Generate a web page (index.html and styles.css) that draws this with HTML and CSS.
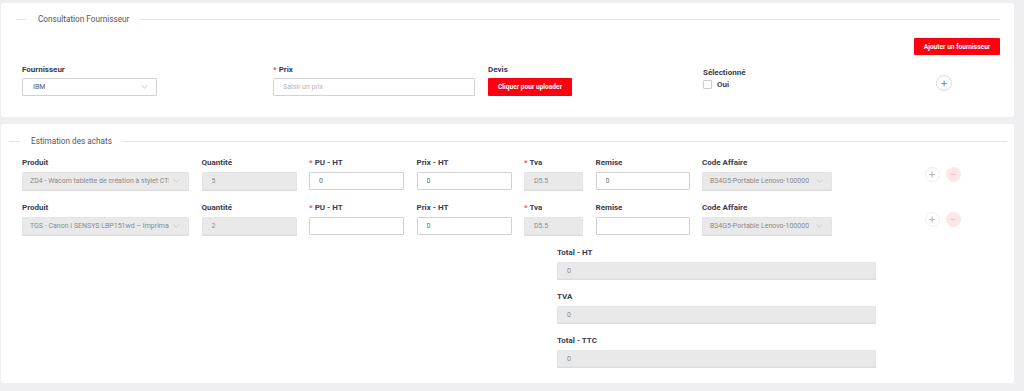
FILE: index.html
```html
<!DOCTYPE html>
<html lang="fr">
<head>
    <meta charset="UTF-8">
    <meta name="viewport" content="width=device-width, initial-scale=1.0">
    <title>Consultation Fournisseur</title>
    <link rel="stylesheet" href="styles.css">
</head>
<body>
    <div class="page">
        <section class="card card-supplier">
            <div class="legend">
                <span class="legend-line short"></span>
                <span class="legend-text">Consultation Fournisseur</span>
                <span class="legend-line long"></span>
            </div>

            <div class="toolbar">
                <button class="btn-red btn-add">Ajouter un fournisseur</button>
            </div>

            <div class="supplier-row">
                <div class="field">
                    <label class="label">Fournisseur</label>
                    <div class="select select-supplier">
                        <span>IBM</span>
                        <svg class="chevron" width="7" height="4" viewBox="0 0 8 5"><polyline points="0.5,0.5 4,4 7.5,0.5" fill="none" stroke="#aaa" stroke-width="0.8"/></svg>
                    </div>
                </div>
                <div class="field">
                    <label class="label"><span class="req">*</span> Prix</label>
                    <input type="text" class="input input-price" placeholder="Saisir un prix">
                </div>
                <div class="field">
                    <label class="label">Devis</label>
                    <button class="btn-red btn-upload">Cliquer pour uploader</button>
                </div>
                <div class="field">
                    <label class="label">Sélectionné</label>
                    <label class="check"><span class="check-box"></span>Oui</label>
                </div>
                <div class="actions">
                    <span class="circle circle-plus">+</span>
                </div>
            </div>
        </section>

        <section class="card card-purchase">
            <div class="legend">
                <span class="legend-line short"></span>
                <span class="legend-text">Estimation des achats</span>
                <span class="legend-line long"></span>
            </div>

            <div class="line-row">
                <div class="field">
                    <label class="label">Produit</label>
                    <div class="select disabled">
                        <span>ZD4 - Wacom tablette de création à stylet CTL</span>
                        <svg class="chevron" width="7" height="4" viewBox="0 0 8 5"><polyline points="0.5,0.5 4,4 7.5,0.5" fill="none" stroke="#bbb" stroke-width="0.8"/></svg>
                    </div>
                </div>
                <div class="field">
                    <label class="label">Quantité</label>
                    <div class="input disabled">5</div>
                </div>
                <div class="field">
                    <label class="label"><span class="req">*</span> PU - HT</label>
                    <input type="text" class="input" value="0">
                </div>
                <div class="field">
                    <label class="label">Prix - HT</label>
                    <input type="text" class="input" value="0">
                </div>
                <div class="field">
                    <label class="label"><span class="req">*</span> Tva</label>
                    <div class="input disabled">D5.5</div>
                </div>
                <div class="field">
                    <label class="label">Remise</label>
                    <input type="text" class="input" value="0">
                </div>
                <div class="field">
                    <label class="label">Code Affaire</label>
                    <div class="select disabled">
                        <span>B34G5-Portable Lenovo-100000</span>
                        <svg class="chevron" width="7" height="4" viewBox="0 0 8 5"><polyline points="0.5,0.5 4,4 7.5,0.5" fill="none" stroke="#bbb" stroke-width="0.8"/></svg>
                    </div>
                </div>
                <div class="actions">
                    <span class="circle circle-plus faint">+</span>
                    <span class="circle circle-minus">&minus;</span>
                </div>
            </div>

            <div class="line-row">
                <div class="field">
                    <label class="label">Produit</label>
                    <div class="select disabled">
                        <span>TGS - Canon I SENSYS LBP151wd – Imprimar</span>
                        <svg class="chevron" width="7" height="4" viewBox="0 0 8 5"><polyline points="0.5,0.5 4,4 7.5,0.5" fill="none" stroke="#bbb" stroke-width="0.8"/></svg>
                    </div>
                </div>
                <div class="field">
                    <label class="label">Quantité</label>
                    <div class="input disabled">2</div>
                </div>
                <div class="field">
                    <label class="label"><span class="req">*</span> PU - HT</label>
                    <input type="text" class="input" value="">
                </div>
                <div class="field">
                    <label class="label">Prix - HT</label>
                    <input type="text" class="input" value="0">
                </div>
                <div class="field">
                    <label class="label"><span class="req">*</span> Tva</label>
                    <div class="input disabled">D5.5</div>
                </div>
                <div class="field">
                    <label class="label">Remise</label>
                    <input type="text" class="input" value="">
                </div>
                <div class="field">
                    <label class="label">Code Affaire</label>
                    <div class="select disabled">
                        <span>B34G5-Portable Lenovo-100000</span>
                        <svg class="chevron" width="7" height="4" viewBox="0 0 8 5"><polyline points="0.5,0.5 4,4 7.5,0.5" fill="none" stroke="#bbb" stroke-width="0.8"/></svg>
                    </div>
                </div>
                <div class="actions">
                    <span class="circle circle-plus faint">+</span>
                    <span class="circle circle-minus">&minus;</span>
                </div>
            </div>

            <div class="totals">
                <div class="field">
                    <label class="label">Total - HT</label>
                    <div class="input disabled total">0</div>
                </div>
                <div class="field">
                    <label class="label">TVA</label>
                    <div class="input disabled total">0</div>
                </div>
                <div class="field">
                    <label class="label">Total - TTC</label>
                    <div class="input disabled total">0</div>
                </div>
            </div>
        </section>
    </div>
</body>
</html>
```

FILE: styles.css
```css
body {
    margin: 0;
    background: #efeff1;
    font-family: Roboto, "Open Sans", sans-serif;
    color: #3b3b4f;
}

.page {
    padding: 3px 10px 0 1px;
}

.card {
    background: white;
    border-radius: 3px;
    margin-bottom: 7px;
}

.card-supplier {
    padding: 11px 14px 21px 15px;
}

.card-purchase {
    padding: 12px 7px 16px 8px;
}

/* fieldset style title */
.legend {
    display: flex;
    align-items: center;
    height: 10px;
}

.legend-line {
    height: 1px;
    background: #e4e4e8;
}

.legend-line.short {
    width: 11px;
}

.legend-line.long {
    flex: 1;
}

.legend-text {
    font-size: 8.2px;
    color: #555;
    padding: 0 11px;
    white-space: nowrap;
}

.card-purchase .legend-text {
    padding: 0 10px 0 11px;
}

.toolbar {
    display: flex;
    justify-content: flex-end;
    margin-top: 14px;
}

.btn-red {
    background: #ff0010;
    color: white;
    border: none;
    border-radius: 1px;
    font-family: Roboto, sans-serif;
    font-weight: bold;
    font-size: 6.6px;
    height: 17px;
    padding: 0;
    cursor: pointer;
}

.btn-add {
    width: 86px;
}

.btn-upload {
    width: 84px;
    height: 18px;
}

.supplier-row {
    display: grid;
    grid-template-columns: 251px 215px 215px 233px 16px;
    align-items: center;
    margin: 10px 0 0 6px;
}

.field {
    display: flex;
    flex-direction: column;
    align-items: flex-start;
}

.label {
    font-size: 8px;
    font-weight: bold;
    line-height: 10px;
    margin-bottom: 3px;
    white-space: nowrap;
}

.req {
    color: #f2545b;
}

.input, .select {
    box-sizing: border-box;
    height: 18px;
    width: 100%;
    border: 1px solid #d2d2d6;
    border-radius: 1px;
    background: white;
    font-family: Roboto, sans-serif;
    font-size: 7px;
    color: #666;
    padding: 0 9px;
    display: flex;
    align-items: center;
    outline: none;
}

.input::placeholder {
    color: #b5b5b5;
}

.select {
    justify-content: space-between;
    gap: 4px;
}

.select span {
    overflow: hidden;
    white-space: nowrap;
}

.chevron {
    flex-shrink: 0;
}

.select-supplier {
    width: 135px;
    padding: 0 8px 0 10px;
    color: #555;
}

.input-price {
    width: 202px;
}

.disabled {
    background: #e9e9ea;
    border-color: #e4e4e6;
    box-shadow: 0 1px 0 #dcdcdc;
    color: #8a8a8a;
}

.check {
    display: flex;
    align-items: center;
    gap: 5px;
    font-size: 8px;
    font-weight: bold;
    color: #444;
    height: 18px;
    margin-top: -5px;
}

.check-box {
    width: 7px;
    height: 7px;
    border: 1px solid #ccc;
    border-radius: 1px;
}

.actions {
    display: flex;
    gap: 6px;
    padding-top: 5px;
}

.circle {
    box-sizing: border-box;
    width: 16px;
    height: 16px;
    border-radius: 50%;
    display: flex;
    align-items: center;
    justify-content: center;
    font-size: 11px;
    line-height: 1;
}

.circle-plus {
    border: 1px solid #dadade;
    color: #888;
}

.circle-plus.faint {
    border-color: #eeeef0;
    color: #b5b5bc;
    width: 15px;
    height: 15px;
}

.circle-minus {
    background: #fde6e7;
    color: #f6b5b8;
    width: 15px;
    height: 15px;
}

.line-row {
    display: grid;
    grid-template-columns: 167px 95px 95px 95px 59px 94px 130px auto;
    column-gap: 12.5px;
    align-items: center;
    margin: 12px 0 0 13px;
}

.line-row + .line-row {
    margin-top: 13px;
}

.line-row .label {
    margin-bottom: 4px;
}

.line-row .select {
    padding: 0 8px 0 7px;
}

.line-row .actions {
    margin-left: 80px;
    padding-top: 1px;
}

.totals {
    display: flex;
    flex-direction: column;
    gap: 13px;
    width: 319px;
    margin: 13px 0 0 548px;
}

.totals .field {
    align-items: stretch;
}

.totals .label {
    margin-bottom: 4px;
}

.input.total {
    height: 17px;
}
```
